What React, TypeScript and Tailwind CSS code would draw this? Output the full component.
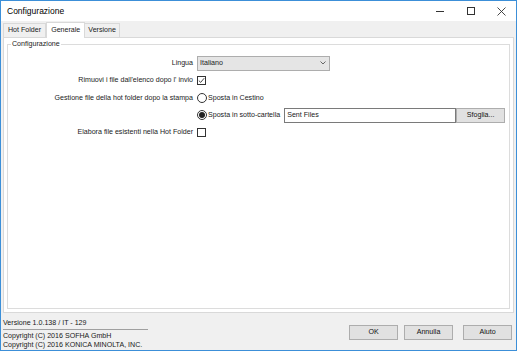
import React from "react";

const font = { fontFamily: '"Liberation Sans", Arial, sans-serif' };

function Check({ checked }: { checked?: boolean }) {
  return (
    <div className="w-[9px] h-[9px] border border-[#333333] bg-white flex items-center justify-center shrink-0">
      {checked && (
        <svg width="7" height="7" viewBox="0 0 7 7">
          <path d="M0.8 3.6 L2.7 5.4 L6.2 1.2" fill="none" stroke="#333" strokeWidth="0.9" />
        </svg>
      )}
    </div>
  );
}

function Radio({ checked }: { checked?: boolean }) {
  return (
    <div className="w-[10px] h-[10px] rounded-full border border-[#333333] bg-white flex items-center justify-center shrink-0">
      {checked && <div className="w-[6px] h-[6px] rounded-full bg-[#222222]" />}
    </div>
  );
}

function Btn({ label, w }: { label: string; w: string }) {
  return (
    <div className={`${w} h-[15px] shrink-0 bg-[#e1e1e1] border border-[#adadad] flex items-center justify-center text-[#111]`}>
      {label}
    </div>
  );
}

export default function App() {
  return (
    <div
      className="w-[517px] h-[351px] border border-[#3c8fd8] bg-[#f0f0f0] flex flex-col text-[7.1px] text-[#1a1a1a] overflow-hidden whitespace-nowrap"
      style={font}
    >
      {/* title bar */}
      <div className="h-[20px] bg-white flex items-center justify-between pl-[6px] shrink-0">
        <span className="text-[8.5px] text-black">Configurazione</span>
        <div className="flex items-center h-full">
          <div className="w-[31px] flex justify-center">
            <div className="w-[8px] h-px bg-[#333]" />
          </div>
          <div className="w-[31px] flex justify-center">
            <div className="w-[8px] h-[8px] border border-[#333]" />
          </div>
          <div className="w-[30px] flex justify-center">
            <svg width="9" height="9" viewBox="0 0 9 9">
              <path d="M0.5 0.5 L8.5 8.5 M8.5 0.5 L0.5 8.5" stroke="#333" strokeWidth="0.9" />
            </svg>
          </div>
        </div>
      </div>

      {/* tabs */}
      <div className="flex items-end pl-[2px] pt-[1px] h-[16px] shrink-0">
        <div className="h-[14px] px-[4px] border border-b-0 border-[#d9d9d9] bg-[#f0f0f0] flex items-center">Hot Folder</div>
        <div className="h-[16px] px-[4px] border border-b-0 border-[#d9d9d9] bg-white flex items-center -mb-px relative z-10">Generale</div>
        <div className="h-[14px] px-[3px] border border-b-0 border-l-0 border-[#d9d9d9] bg-[#f0f0f0] flex items-center">Versione</div>
      </div>

      {/* panel */}
      <div className="mx-[2px] bg-white border border-[#d9d9d9] h-[276px] px-[3px] pt-[6px] pb-[3px] shrink-0">
        <div className="relative border border-[#dcdcdc] h-full">
          <span className="absolute -top-[6px] left-[3px] bg-white px-[1px] leading-[10px]">Configurazione</span>
          <div className="grid grid-cols-[185px_1fr] gap-x-[4px] items-center pt-[10px] pr-[3px]">
            <div className="text-right h-[16px] leading-[16px]">Lingua</div>
            <div className="h-[16px] flex items-center">
              <div className="w-[133px] h-[15px] bg-[#e5e5e5] border border-[#adadad] flex items-center justify-between pl-[2px] pr-[3px]">
                <span>Italiano</span>
                <svg width="6" height="4" viewBox="0 0 6 4">
                  <path d="M0.5 0.5 L3 3 L5.5 0.5" fill="none" stroke="#444" strokeWidth="0.8" />
                </svg>
              </div>
            </div>

            <div className="text-right h-[18px] leading-[18px]">Rimuovi i file dall'elenco dopo l' invio</div>
            <div className="h-[18px] flex items-center">
              <Check checked />
            </div>

            <div className="text-right h-[18px] leading-[18px]">Gestione file della hot folder dopo la stampa</div>
            <div className="h-[18px] flex items-center gap-[1px]">
              <Radio />
              <span>Sposta in Cestino</span>
            </div>

            <div className="h-[16px]" />
            <div className="h-[16px] flex items-center">
              <Radio checked />
              <span className="ml-[1px] mr-[4px]">Sposta in sotto-cartella</span>
              <div className="w-[172px] h-[15px] shrink-0 border border-[#7a7a7a] bg-white flex items-center pl-[2px]">Sent Files</div>
              <Btn label="Sfoglia..." w="w-[49px]" />
            </div>

            <div className="text-right h-[18px] leading-[18px]">Elabora file esistenti nella Hot Folder</div>
            <div className="h-[18px] flex items-center">
              <Check />
            </div>
          </div>
        </div>
      </div>

      {/* footer */}
      <div className="flex flex-1 justify-between pl-[2px] pr-[4px]">
        <div className="flex flex-col pt-[5px]">
          <div className="leading-[10px] pb-[1px]">Versione 1.0.138 / IT - 129</div>
          <div className="w-[145px] h-px bg-[#a0a0a0]" />
          <div className="leading-[9px] pt-[2px]">Copyright (C) 2016 SOFHA GmbH</div>
          <div className="leading-[9px]">Copyright (C) 2016 KONICA MINOLTA, INC.</div>
        </div>
        <div className="flex gap-[6px] pt-[12px]">
          <Btn label="OK" w="w-[49px]" />
          <Btn label="Annulla" w="w-[49px]" />
          <div className="ml-[4px]">
            <Btn label="Aiuto" w="w-[49px]" />
          </div>
        </div>
      </div>
    </div>
  );
}
